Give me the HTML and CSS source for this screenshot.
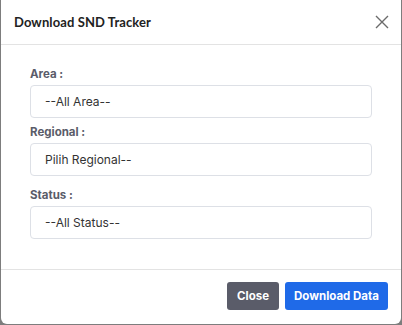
FILE: index.html
```html
<!DOCTYPE html>
<html>
<head>
<meta charset="utf-8">
<link rel="stylesheet" href="styles.css">
</head>
<body>
<div class="modal">
  <div class="modal-header">
    <h5 class="modal-title">Download SND Tracker</h5>
    <button class="btn-close" aria-label="Close">
      <svg width="14" height="14" viewBox="0 0 14 14"><path d="M1 1L13 13M13 1L1 13" stroke="#6b6b6b" stroke-width="1.4" fill="none"/></svg>
    </button>
  </div>
  <div class="modal-body">
    <div class="group g-area">
      <label class="label">Area :</label>
      <div class="select">--All Area--</div>
    </div>
    <div class="group g-regional">
      <label class="label">Regional :</label>
      <div class="select">Pilih Regional--</div>
    </div>
    <div class="group g-status">
      <label class="label">Status :</label>
      <div class="select">--All Status--</div>
    </div>
  </div>
  <div class="modal-footer">
    <button class="btn btn-secondary">Close</button>
    <button class="btn btn-primary">Download Data</button>
  </div>
</div>
</body>
</html>
```
FILE: styles.css
```css
* { box-sizing: border-box; }
html, body { margin: 0; padding: 0; }
body {
  width: 402px;
  height: 325px;
  background: #7d7d7d;
  padding: 0 1px 1px 1px;
  overflow: hidden;
  font-family: Inter, "Noto Sans", sans-serif;
}
.modal {
  height: 324px;
  background: #fff;
  border-radius: 0 0 6px 6px;
  display: flex;
  flex-direction: column;
}
.modal-header {
  height: 45px;
  border-bottom: 1px solid #e3e3e3;
  display: flex;
  align-items: center;
  justify-content: space-between;
  padding: 0 12px 0 13px;
}
.modal-title {
  margin: 0;
  font-family: Lato, "Noto Sans", sans-serif;
  font-size: 13px;
  font-weight: 700;
  color: #222;
  letter-spacing: 0.1px;
}
.btn-close {
  border: 0;
  background: none;
  padding: 0;
  width: 14px;
  height: 14px;
  display: flex;
}
.modal-body {
  flex: 1;
  padding: 22px 29px 0 29px;
}
.group { display: flex; flex-direction: column; }
.label {
  font-size: 11.5px;
  font-weight: 700;
  color: #5a5c69;
  line-height: 14px;
  margin-bottom: 4px;
}
.g-regional { margin-top: 7px; }
.g-status { margin-top: 12px; }
.select {
  height: 33px;
  border: 1px solid #dde0e6;
  border-radius: 4px;
  padding: 0 14px;
  display: flex;
  align-items: center;
  font-size: 12px;
  color: #333;
}
.modal-footer {
  height: 55px;
  border-top: 1px solid #e3e3e3;
  display: flex;
  justify-content: flex-end;
  align-items: flex-start;
  gap: 6px;
  padding: 12px 13px 0 0;
}
.btn {
  height: 28px;
  border: 0;
  border-radius: 3px;
  color: #fff;
  font-family: Inter, "Noto Sans", sans-serif;
  font-size: 11.5px;
  font-weight: 700;
  padding: 0;
  white-space: nowrap;
  text-align: center;
}
.btn-secondary { background: #5a5c69; width: 52px; }
.btn-primary { background: #1f6ae8; width: 103px; }
```
